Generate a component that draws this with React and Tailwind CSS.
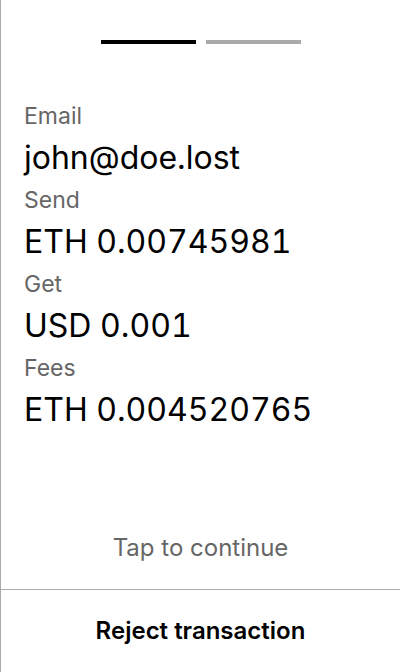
const rows = [
  { label: 'Email', value: 'john@doe.lost' },
  { label: 'Send', value: 'ETH 0.00745981' },
  { label: 'Get', value: 'USD 0.001' },
  { label: 'Fees', value: 'ETH 0.004520765' },
]

export default function App() {
  return (
    <div
      className="flex h-[672px] w-[400px] flex-col border-l border-[#aaaaaa] bg-white text-black"
      style={{ fontFamily: 'Inter, "Noto Sans", sans-serif' }}
    >
      <div className="flex justify-center gap-[10px] pt-10">
        <span className="h-1 w-[95px] bg-black" />
        <span className="h-1 w-[95px] bg-[#aaaaaa]" />
      </div>

      <div className="flex-1 pl-[23px] pr-6 pt-[54px]">
        {rows.map((row) => (
          <div key={row.label}>
            <p className="text-[23px] leading-[36px] text-[#666666]">{row.label}</p>
            <p className="text-[32px] leading-[48px] tabular-nums">{row.value}</p>
          </div>
        ))}
      </div>

      <p className="pb-[25px] text-center text-[24px] leading-[32px] text-[#666666]">
        Tap to continue
      </p>

      <button
        type="button"
        className="h-[83px] w-full border-t border-[#aaaaaa] text-[24px] font-semibold"
      >
        Reject transaction
      </button>
    </div>
  )
}
